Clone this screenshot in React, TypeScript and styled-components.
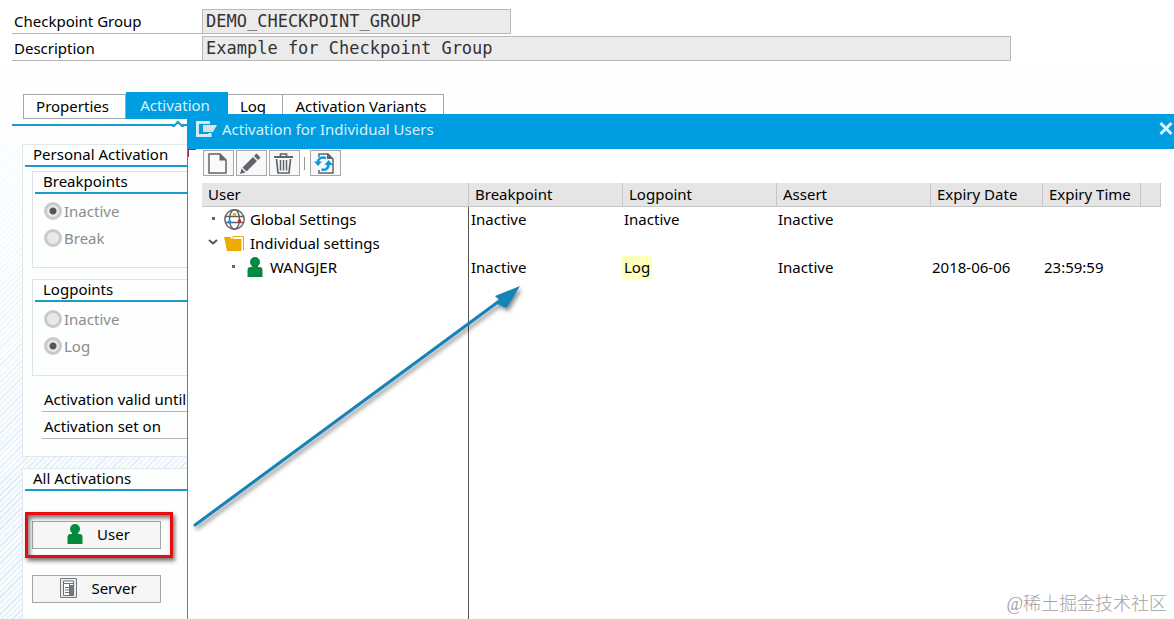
import React from 'react';
import styled, { createGlobalStyle } from 'styled-components';

const BLUE = '#009de0';
const RULE = '#1a9bcb';

const GlobalStyle = createGlobalStyle`
  *, *::before, *::after { box-sizing: border-box; }
  body {
    margin: 0;
    background: #fff;
    color: #000;
    font: 15px/20px "Noto Sans", "Liberation Sans", sans-serif;
  }
  button, input { font: inherit; color: inherit; margin: 0; }
`;

const Page = styled.div`
  position: relative;
  isolation: isolate;
  display: flex;
  flex-direction: column;
  min-height: 100vh;
  overflow: hidden;
  padding: 9px 12px 0;

  &::before {
    content: '';
    position: absolute;
    inset: 0;
    z-index: -1;
    background: repeating-linear-gradient(135deg, #f6fbfe 0 2px, #d9e8f4 2px 3px, #f6fbfe 3px 4px);
    mask-image: linear-gradient(to bottom, transparent 60px, #000 560px);
  }
`;

const Field = styled.label`
  display: flex;
  margin-bottom: 2px;
`;

const FieldLabel = styled.span`
  flex: 0 0 190px;
  height: 25px;
  padding: 2px 2px 0;
  border-bottom: 1px solid #b4b4b8;
`;

const FieldInput = styled.input<{ $width: number }>`
  flex: 0 1 ${(p) => p.$width}px;
  min-width: 0;
  height: 25px;
  padding: 0 3px 2px;
  border: 1px solid #b9b9b9;
  border-radius: 0;
  background: #ebebeb;
  color: #333;
  font: 17px/20px "DejaVu Sans Mono", "Liberation Mono", monospace;
  outline: none;
`;

const TabBar = styled.nav`
  display: flex;
  align-items: flex-end;
  margin-top: 29px;
  padding: 0 11px 5px;
  border-bottom: 2px solid ${RULE};
`;

const Tab = styled.button<{ $width: number; $active?: boolean }>`
  position: relative;
  width: ${(p) => p.$width}px;
  height: ${(p) => (p.$active ? 27 : 25)}px;
  padding: 0 4px 2px 0;
  border: 1px solid ${(p) => (p.$active ? BLUE : '#a6a6a6')};
  border-left-width: ${(p) => (p.$active ? 1 : 0)}px;
  background: ${(p) => (p.$active ? BLUE : '#fff')};
  color: ${(p) => (p.$active ? '#d6f3ff' : '#000')};
  &:first-child { border-left-width: 1px; }
`;

const TabNotch = styled.svg`
  position: absolute;
  right: 43px;
  top: 27px;
`;

const Panels = styled.main`
  display: flex;
  flex-direction: column;
  gap: 11px;
  margin-top: 18px;
  padding-left: 10px;
`;

const Panel = styled.section`
  padding: 0 0 17px 9px;
  border: 1px solid #e2e7ea;
  background: #fdfefe;
`;

const PanelTitle = styled.h2`
  margin: 0 0 0 -7px;
  padding: 0 8px;
  height: 22px;
  border-bottom: 2px solid ${RULE};
  font: inherit;
  line-height: 18px;
`;

const Group = styled.fieldset`
  min-width: 0;
  height: 97px;
  margin: 4px 0 11px;
  padding: 0 0 0 2px;
  border: 1px solid #dfe3e6;
`;

const GroupTitle = styled.legend`
  float: left;
  width: 100%;
  height: 22px;
  margin-bottom: 3px;
  padding: 0 8px;
  border-bottom: 2px solid ${RULE};
  line-height: 18px;
`;

const Option = styled.label`
  clear: both;
  display: flex;
  align-items: center;
  gap: 2px;
  height: 27px;
  padding-left: 9px;
  color: #8c8c8c;
`;

const Radio = styled.input`
  appearance: none;
  width: 18px;
  height: 18px;
  border: 3px solid #cacaca;
  border-radius: 50%;
  background: #e9e9e9;
  &:checked { background: radial-gradient(circle, #555 0 3px, #e9e9e9 4px); }
`;

const Info = styled.div`
  height: 25px;
  margin: 2px 0 0 10px;
  padding: 2px 2px 0;
  border-bottom: 1px solid #b4b4b8;
`;

const ButtonStack = styled.div`
  display: flex;
  flex-direction: column;
  align-items: flex-start;
  gap: 26px;
  padding-top: 30px;
`;

const ActionButton = styled.button`
  display: flex;
  align-items: center;
  justify-content: center;
  gap: 14px;
  width: 129px;
  height: 28px;
  padding: 0 0 2px 4px;
  border: 1px solid #a3a5a7;
  background: #f6f6f6;
`;

const Marked = styled.div`
  position: relative;
  &::after {
    content: '';
    position: absolute;
    inset: -9px -12px -9px -7px;
    border: 3px solid #e60c10;
    box-shadow: 2px 3px 4px #0008, inset 2px 3px 4px #0008;
    pointer-events: none;
  }
`;

const Dialog = styled.section`
  position: absolute;
  inset: 114px 0 0 187px;
  display: flex;
  flex-direction: column;
  border-left: 1px solid ${RULE};
  background: #fff;
`;

const TitleBar = styled.header`
  display: flex;
  align-items: flex-start;
  gap: 5px;
  height: 35px;
  margin-left: -1px;
  padding: 5px 1px 0 9px;
  background: ${BLUE};
  color: #d3f2ff;
  h1 { flex: 1; margin: 0; font: inherit; }
  > svg { margin-top: 2px; }
`;

const CloseButton = styled.button`
  display: flex;
  padding: 3px 0 0;
  border: 0;
  background: none;
`;

const Corner = styled.span`
  position: absolute;
  top: 35px;
  left: 0;
  width: 8px;
  height: 8px;
  border: solid #b02040;
  border-width: 1px 0 0 1px;
`;

const Toolbar = styled.div`
  display: flex;
  align-items: center;
  gap: 2px;
  padding: 1px 15px 7px;
`;

const ToolButton = styled.button`
  display: grid;
  place-items: center;
  width: 31px;
  height: 26px;
  padding: 0 2px 0 0;
  border: 1px solid #a8a8a8;
  background: #f7f8f9;
`;

const Separator = styled.span`
  width: 1px;
  height: 13px;
  margin: 0 3px 0 2px;
  background: #9a9a9a;
`;

const GridArea = styled.div`
  flex: 1;
  display: grid;
  padding: 0 13px 0 14px;
`;

const Grid = styled.table`
  width: 100%;
  table-layout: fixed;
  border-spacing: 0;
  th, td { text-align: left; font-weight: normal; white-space: nowrap; }
  th {
    height: 24px;
    padding: 0 0 2px 6px;
    background: #e5e5e5;
    border: solid #c6c6c6;
    border-width: 0 1px 1px 0;
  }
  td { height: 24px; padding: 0 0 0 1px; }
  td:first-child { border-right: 1px solid #555; padding: 0; }
  td:nth-child(2) { padding-left: 2px; }
  tr:last-child td { height: auto; }
`;

const Node = styled.div<{ $depth: number }>`
  display: flex;
  align-items: center;
  padding-left: ${(p) => p.$depth * 20 + 5}px;
`;

const IconSlot = styled.span`
  display: flex;
  justify-content: center;
  width: 21px;
  margin: 0 5px 0 5px;
`;

const Highlight = styled.mark`
  display: inline-block;
  height: 23px;
  margin-left: -2px;
  padding: 1px 2px;
  background: #ffffbe;
  color: inherit;
`;

const Arrow = styled.svg`
  position: absolute;
  left: 187px;
  top: 276px;
  pointer-events: none;
  filter: drop-shadow(2px 3px 2px #0007);
`;

const Watermark = styled.span`
  position: absolute;
  right: 7px;
  bottom: 5px;
  color: #a2a2a2;
  font: 18px/24px "Liberation Serif", "Noto Sans CJK SC", serif;
  font-weight: 300;
`;

const PersonIcon = () => (
  <svg width="16" height="20" viewBox="0 0 16 20" fill="#048a3f">
    <circle cx="8" cy="5" r="5" />
    <path d="M5 8h6v2h1.500Q15.500 10 15.500 13v7H.5v-7Q.5 10 3.500 10H5z" />
  </svg>
);

const ServerIcon = () => (
  <svg width="17" height="20" viewBox="0 0 17 20">
    <path d="M.5.5h16v19H.5z" fill="#e8ebee" stroke="#747b83" />
    <path d="M3.500 3h10v14.500h-10z" fill="#fff" stroke="#6b7178" />
    <path d="M4 5.500h9M5 9.500h4M5 12h4M5 14.500h4M9.500 6v11" stroke="#6b7178" fill="none" />
    <path d="M10 7h3v10h-3z" fill="#777" />
  </svg>
);

const WindowIcon = () => (
  <svg width="21" height="16" viewBox="0 0 21 16">
    <path d="M14 1.500H1.500v13H14V12" fill="none" stroke="#d3e9f4" strokeWidth="3" />
    <path d="M7 4h14l-4 7H7z" fill="#dfdfe0" />
  </svg>
);

const CloseIcon = () => (
  <svg width="14" height="13" viewBox="0 0 14 13">
    <path d="M1.500 1l11 11M12.500 1l-11 11" stroke="#d9f3ff" strokeWidth="3" />
  </svg>
);

const NewIcon = () => (
  <svg width="19" height="21" viewBox="0 0 19 21">
    <path d="M1 1h11l6 6v13H1z" fill="#fafafa" stroke="#626468" strokeWidth="1.500" />
    <path d="M11.500 1v6.500H18z" fill="#626468" />
  </svg>
);

const PencilIcon = () => (
  <svg width="21" height="21" viewBox="0 0 21 21" fill="#626468">
    <path d="M0 21l1.500-5.500 4 4zM2.500 14.500L13 4l4 4L6.500 18.500zM14 3l2.500-2.500 4 4L18 7z" />
  </svg>
);

const TrashIcon = () => (
  <svg width="19" height="21" viewBox="0 0 19 21" fill="none" stroke="#626468">
    <path d="M0 4h19" strokeWidth="2" />
    <path d="M6.500 3V1h6v2M2.500 6l1.500 14h11l1.500-14" strokeWidth="1.700" />
    <path d="M6.500 7v10.500M9.500 7v10.500M12.500 7v10.500" strokeWidth="1.500" />
  </svg>
);

const RefreshIcon = () => (
  <svg width="21" height="21" viewBox="0 0 21 21" fill="none">
    <path d="M5 4V1h9l5 5v14H5v-3" fill="#fafafa" stroke="#626468" strokeWidth="1.500" />
    <path d="M13 0v6h6z" fill="#626468" />
    <path d="M4 9.500C4 5 8 3.500 12 5M14.500 11c0 5-3 6.500-7 5.500" stroke="#0a98dc" strokeWidth="2.500" />
    <path d="M0 8.500h8l-4 4.500zM10.500 12l4-5 4.500 5z" fill="#0a98dc" />
  </svg>
);

const GlobeIcon = () => (
  <svg width="21" height="21" viewBox="0 0 21 21" fill="none" stroke="#606266" strokeWidth="1.400">
    <circle cx="10.500" cy="10.500" r="9.700" />
    <ellipse cx="10.500" cy="10.500" rx="5" ry="9.700" />
    <path d="M1 7.500h19M1 13.500h19" />
    <g stroke="none">
      <circle cx="10.500" cy="5.500" r="1.800" fill="#f0ab00" />
      <circle cx="5.500" cy="13" r="1.800" fill="#009de0" />
      <circle cx="15.500" cy="12" r="1.800" fill="#d0202a" />
    </g>
  </svg>
);

const FolderIcon = () => (
  <svg width="21" height="17" viewBox="0 0 21 17">
    <path d="M9 5V1.500h10.500V15" fill="#fff" stroke="#f0ab00" />
    <path d="M0 2h6l2 2h9.500v12H3z" fill="#f0ab00" />
  </svg>
);

const Bullet = () => (
  <svg width="12" height="10" viewBox="0 0 12 10"><path d="M5 3h3v3H5z" fill="#666" /></svg>
);

const Chevron = () => (
  <svg width="12" height="10" viewBox="0 0 12 10">
    <path d="M2 2l4 3.500L10 2" fill="none" stroke="#555" strokeWidth="2" />
  </svg>
);

const rows = [
  { depth: 0, mark: <Bullet />, icon: <GlobeIcon />, name: 'Global Settings', values: ['Inactive', 'Inactive', 'Inactive', '', ''] },
  { depth: 0, mark: <Chevron />, icon: <FolderIcon />, name: 'Individual settings', values: ['', '', '', '', ''] },
  { depth: 1, mark: <Bullet />, icon: <PersonIcon />, name: 'WANGJER', values: ['Inactive', 'Log', 'Inactive', '2018-06-06', '23:59:59'] },
];

const RadioGroup = ({ title, options, selected }: { title: string; options: string[]; selected: string }) => (
  <Group>
    <GroupTitle>{title}</GroupTitle>
    {options.map((option) => (
      <Option key={option}>
        <Radio type="radio" name={title} defaultChecked={option === selected} />
        {option}
      </Option>
    ))}
  </Group>
);

export default function App() {
  return (
    <Page>
      <GlobalStyle />
      <Field>
        <FieldLabel>Checkpoint Group</FieldLabel>
        <FieldInput $width={309} readOnly value="DEMO_CHECKPOINT_GROUP" />
      </Field>
      <Field>
        <FieldLabel>Description</FieldLabel>
        <FieldInput $width={809} readOnly value="Example for Checkpoint Group" />
      </Field>

      <TabBar>
        <Tab $width={103}>Properties</Tab>
        <Tab $width={102} $active>
          Activation
          <TabNotch width="12" height="7" viewBox="0 0 12 7">
            <path d="M1 5.500L6 1l5 4.500V7H1z" fill="#fff" />
            <path d="M0 6h2l4-4 4 4h2" fill="none" stroke={RULE} strokeWidth="2" />
          </TabNotch>
        </Tab>
        <Tab $width={55}>Log</Tab>
        <Tab $width={161}>Activation Variants</Tab>
      </TabBar>

      <Panels>
        <Panel>
          <PanelTitle>Personal Activation</PanelTitle>
          <RadioGroup title="Breakpoints" options={['Inactive', 'Break']} selected="Inactive" />
          <RadioGroup title="Logpoints" options={['Inactive', 'Log']} selected="Log" />
          <Info>Activation valid until</Info>
          <Info>Activation set on</Info>
        </Panel>
        <Panel>
          <PanelTitle>All Activations</PanelTitle>
          <ButtonStack>
            <Marked>
              <ActionButton><PersonIcon />User</ActionButton>
            </Marked>
            <ActionButton><ServerIcon />Server</ActionButton>
          </ButtonStack>
        </Panel>
      </Panels>

      <Dialog role="dialog" aria-label="Activation for Individual Users">
        <TitleBar>
          <WindowIcon />
          <h1>Activation for Individual Users</h1>
          <CloseButton aria-label="Close"><CloseIcon /></CloseButton>
        </TitleBar>
        <Corner />
        <Toolbar>
          <ToolButton aria-label="Create"><NewIcon /></ToolButton>
          <ToolButton aria-label="Change"><PencilIcon /></ToolButton>
          <ToolButton aria-label="Delete"><TrashIcon /></ToolButton>
          <Separator />
          <ToolButton aria-label="Refresh"><RefreshIcon /></ToolButton>
        </Toolbar>
        <GridArea>
          <Grid>
            <colgroup>
              <col />
              <col width="154" />
              <col width="154" />
              <col width="154" />
              <col width="112" />
              <col width="98" />
              <col width="20" />
            </colgroup>
            <thead>
              <tr>
                <th>User</th>
                <th>Breakpoint</th>
                <th>Logpoint</th>
                <th>Assert</th>
                <th>Expiry Date</th>
                <th>Expiry Time</th>
                <th />
              </tr>
            </thead>
            <tbody>
              {rows.map((row) => (
                <tr key={row.name}>
                  <td>
                    <Node $depth={row.depth}>
                      {row.mark}
                      <IconSlot>{row.icon}</IconSlot>
                      {row.name}
                    </Node>
                  </td>
                  {row.values.map((value, i) => (
                    <td key={i}>{value === 'Log' ? <Highlight>{value}</Highlight> : value}</td>
                  ))}
                  <td />
                </tr>
              ))}
              <tr><td /><td colSpan={6} /></tr>
            </tbody>
          </Grid>
        </GridArea>
      </Dialog>

      <Arrow width="340" height="260" viewBox="187 276 340 260">
        <path d="M195 525L502 299" stroke="#1583b8" strokeWidth="3" strokeLinecap="round" />
        <path d="M520 286l-25 10 4.500 4-2.500 4 9.500 4z" fill="#1583b8" />
      </Arrow>
      <Watermark>@稀土掘金技术社区</Watermark>
    </Page>
  );
}
